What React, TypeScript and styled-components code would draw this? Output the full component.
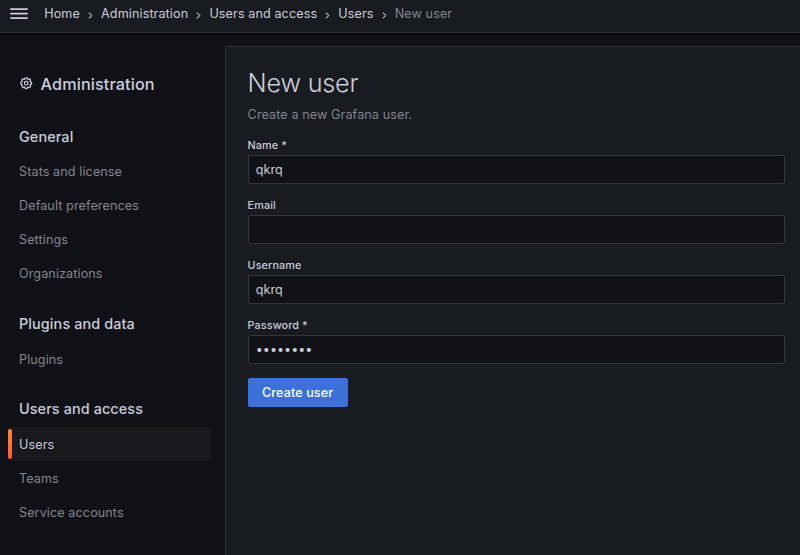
import React, { useState } from "react";
import styled, { createGlobalStyle } from "styled-components";

const GlobalStyle = createGlobalStyle`
  *, *::before, *::after { box-sizing: border-box; }
  html, body { margin: 0; padding: 0; background: #111217; }
  body {
    height: 555px;
    overflow: hidden;
    font-family: Inter, "Liberation Sans", sans-serif;
    font-size: 12.6px;
    line-height: 20px;
    letter-spacing: 0.1px;
    color: #ccccdc;
  }
`;

const Page = styled.div`
  display: flex;
  flex-direction: column;
  height: 555px;
  background: #111217;
`;

const TopBar = styled.header`
  display: flex;
  align-items: center;
  flex: none;
  height: 33px;
  padding: 0 10px 5px;
  background: #181b1f;
  border-bottom: 1px solid #2e3035;
  box-shadow: 0 1px 3px #000;
`;

const MenuButton = styled.button`
  display: flex;
  padding: 0;
  border: 0;
  background: none;
  color: #ccccdc;
`;

const Breadcrumbs = styled.nav`
  display: flex;
  align-items: center;
  margin-left: 16.2px;
`;

const Crumb = styled.a<{ $current?: boolean }>`
  color: ${(p) => (p.$current ? "#84858f" : "#ccccdc")};
  white-space: nowrap;
`;

const Separator = styled.svg`
  margin: 3px 8.1px 0 8.1px;
  color: #9c9da8;
`;

const Body = styled.div`
  display: flex;
  flex: 1;
  min-height: 0;
`;

const Sidebar = styled.aside`
  flex: none;
  width: 225px;
  padding: 41px 14px 0 8px;
`;

const SidebarTitle = styled.h2`
  display: flex;
  align-items: center;
  gap: 7.2px;
  margin: 0 0 33px;
  padding-left: 11px;
  font-size: 16.2px;
  font-weight: 500;
  line-height: 20px;
  letter-spacing: 0.13px;

  svg { margin-top: -2px; }
`;

const Section = styled.section<{ $gap?: number }>`
  margin-bottom: ${(p) => p.$gap ?? 23}px;
`;

const SectionTitle = styled.h3`
  margin: 0 0 8px;
  padding-left: 11px;
  font-size: 14.4px;
  font-weight: 500;
  line-height: 20px;
  letter-spacing: 0.11px;
`;

const NavItem = styled.a<{ $active?: boolean }>`
  position: relative;
  display: flex;
  align-items: center;
  height: 34px;
  padding-left: 11px;
  border-radius: 2px;
  line-height: 19.8px;
  color: ${(p) => (p.$active ? "#ccccdc" : "#84858f")};
  background: ${(p) => (p.$active ? "#18191d" : "transparent")};

  &::before {
    content: "";
    display: ${(p) => (p.$active ? "block" : "none")};
    position: absolute;
    left: 0;
    top: 2px;
    width: 4px;
    height: 30px;
    border-radius: 2px;
    background: linear-gradient(#ff8833, #f55f3e);
  }
`;

const Panel = styled.main`
  flex: 1;
  margin-top: 13px;
  padding: 22px 15px 0 21.6px;
  background: #181b1f;
  border: 1px solid #2e3035;
  border-width: 1px 0 0 1px;
  border-top-left-radius: 2px;
`;

const PageTitle = styled.h1`
  margin: 0;
  font-size: 25.2px;
  font-weight: 300;
  line-height: 29px;
  letter-spacing: -0.2px;
`;

const Subtitle = styled.p`
  margin: 7px 0 13px;
  color: #84858f;
`;

const Field = styled.label`
  display: block;
  margin-bottom: 14px;
`;

const FieldLabel = styled.span`
  display: block;
  padding-top: 1px;
  margin-bottom: 2px;
  font-size: 10.8px;
  font-weight: 500;
  line-height: 14px;
  letter-spacing: 0.1px;
`;

const Input = styled.input`
  display: block;
  width: 100%;
  height: 29px;
  padding: 0 7.2px;
  border: 1px solid #34363b;
  border-radius: 2px;
  outline: 0;
  background: #111217;
  color: #ccccdc;
  font: inherit;
  letter-spacing: 0;
`;

const SubmitButton = styled.button`
  width: 100px;
  height: 29px;
  padding: 0;
  border: 0;
  border-radius: 2px;
  background: #3d71d9;
  color: #fff;
  font: inherit;
  font-weight: 500;
  letter-spacing: 0.09px;
`;

const MenuIcon = () => (
  <svg width="18" height="12" viewBox="0 0 18 12" stroke="currentColor" strokeWidth="1.8" strokeLinecap="round">
    <path d="M.9 1.1h16.2M.9 5.6h16.2M.9 10.1h16.2" />
  </svg>
);

const CogIcon = () => (
  <svg width="14.4" height="14.4" viewBox="0 0 24 24" fill="currentColor">
    <path d="M21.32,9.55,19.43,8.92l.89-1.78A1,1,0,0,0,20.13,6L18,3.87a1,1,0,0,0-1.15-.19l-1.78.89-.63-1.89A1,1,0,0,0,13.5,2h-3a1,1,0,0,0-.95.68L8.92,4.57,7.14,3.68A1,1,0,0,0,6,3.87L3.87,6a1,1,0,0,0-.19,1.15l.89,1.78-1.89.63A1,1,0,0,0,2,10.5v3a1,1,0,0,0,.68.95l1.89.63-.89,1.78A1,1,0,0,0,3.87,18L6,20.13a1,1,0,0,0,1.15.19l1.78-.89.63,1.89a1,1,0,0,0,.95.68h3a1,1,0,0,0,.95-.68l.63-1.89,1.78.89A1,1,0,0,0,18,20.13L20.13,18a1,1,0,0,0,.19-1.15l-.89-1.78,1.89-.63A1,1,0,0,0,22,13.5v-3A1,1,0,0,0,21.32,9.55ZM20,12.78l-1.2.4A2,2,0,0,0,17.64,16l.57,1.14-1.1,1.1L16,17.64a2,2,0,0,0-2.79,1.16l-.4,1.2H11.22l-.4-1.2A2,2,0,0,0,8,17.64l-1.14.57-1.1-1.1L6.36,16A2,2,0,0,0,5.2,13.18L4,12.78V11.22l1.2-.4A2,2,0,0,0,6.36,8L5.79,6.89l1.1-1.1L8,6.36A2,2,0,0,0,10.82,5.2l.4-1.2h1.56l.4,1.2A2,2,0,0,0,16,6.36l1.14-.57,1.1,1.1L17.64,8a2,2,0,0,0,1.16,2.79l1.2.4ZM12,8a4,4,0,1,0,4,4A4,4,0,0,0,12,8Zm0,6a2,2,0,1,1,2-2A2,2,0,0,1,12,14Z" />
  </svg>
);

const Chevron = () => (
  <Separator width="5" height="7" viewBox="0 0 5 7" fill="none" stroke="currentColor" strokeWidth="1.2" strokeLinecap="round" strokeLinejoin="round">
    <path d="M1.2 1l2.6 2.5L1.2 6" />
  </Separator>
);

const crumbs = ["Home", "Administration", "Users and access", "Users"];

const sections = [
  { title: "General", gap: 23.45, items: ["Stats and license", "Default preferences", "Settings", "Organizations"] },
  { title: "Plugins and data", gap: 23, items: ["Plugins"] },
  { title: "Users and access", gap: 0, items: ["Users", "Teams", "Service accounts"] },
];

const initialFields = [
  { label: "Name *", type: "text", value: "qkrq" },
  { label: "Email", type: "text", value: "" },
  { label: "Username", type: "text", value: "qkrq" },
  { label: "Password *", type: "password", value: "password" },
];

export default function App() {
  const [fields, setFields] = useState(initialFields);
  const update = (index: number, value: string) =>
    setFields((prev) => prev.map((f, i) => (i === index ? { ...f, value } : f)));

  return (
    <Page>
      <GlobalStyle />
      <TopBar>
        <MenuButton aria-label="Toggle menu">
          <MenuIcon />
        </MenuButton>
        <Breadcrumbs>
          {crumbs.map((name) => (
            <React.Fragment key={name}>
              <Crumb>{name}</Crumb>
              <Chevron />
            </React.Fragment>
          ))}
          <Crumb $current>New user</Crumb>
        </Breadcrumbs>
      </TopBar>
      <Body>
        <Sidebar>
          <SidebarTitle>
            <CogIcon />
            Administration
          </SidebarTitle>
          {sections.map((section) => (
            <Section key={section.title} $gap={section.gap}>
              <SectionTitle>{section.title}</SectionTitle>
              {section.items.map((item) => (
                <NavItem key={item} $active={item === "Users"}>
                  {item}
                </NavItem>
              ))}
            </Section>
          ))}
        </Sidebar>
        <Panel>
          <PageTitle>New user</PageTitle>
          <Subtitle>Create a new Grafana user.</Subtitle>
          {fields.map((field, i) => (
            <Field key={field.label}>
              <FieldLabel>{field.label}</FieldLabel>
              <Input type={field.type} value={field.value} onChange={(e) => update(i, e.target.value)} />
            </Field>
          ))}
          <SubmitButton type="button">Create user</SubmitButton>
        </Panel>
      </Body>
    </Page>
  );
}
